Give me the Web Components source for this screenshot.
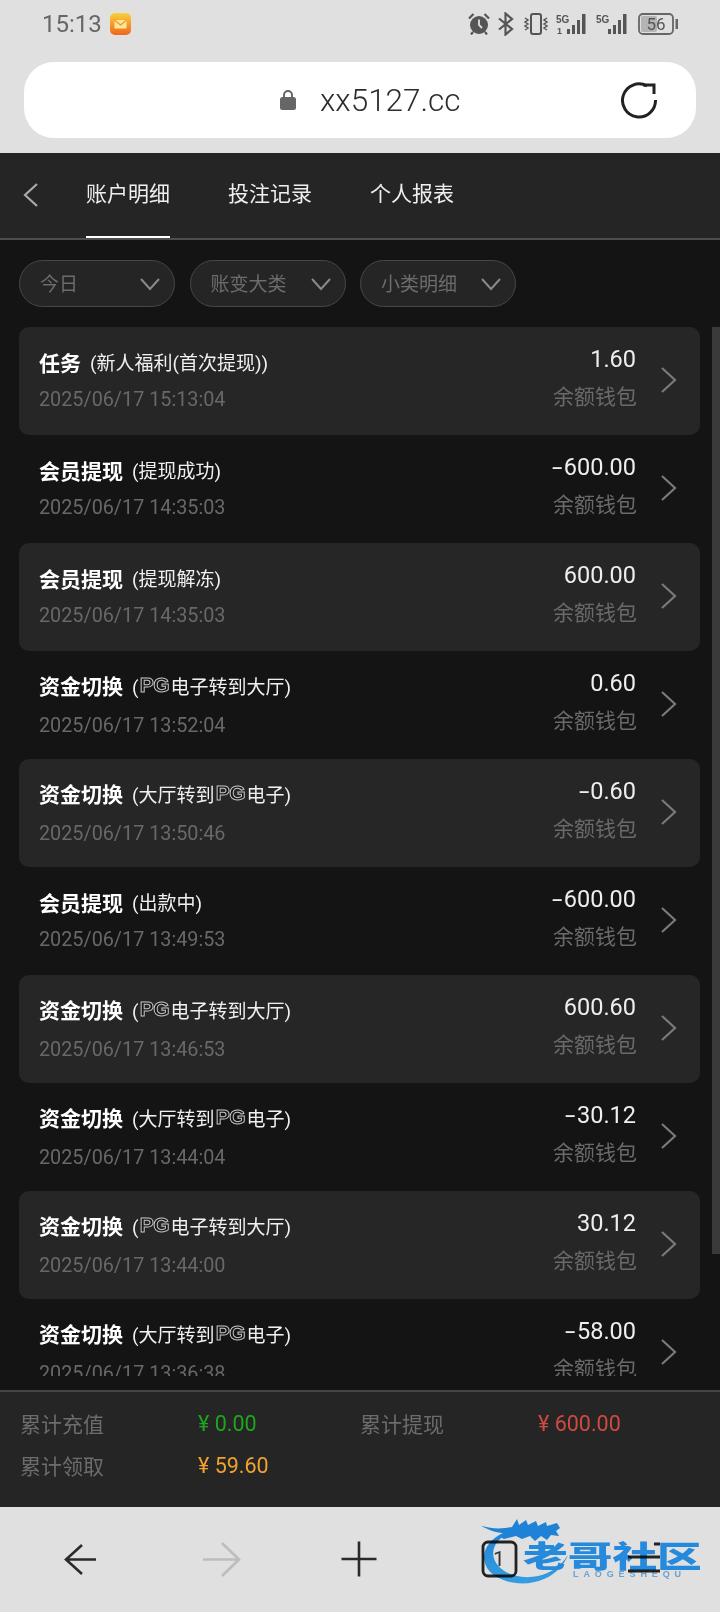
<!DOCTYPE html>
<html lang="zh-CN">
<head>
<meta charset="utf-8">
<title>账户明细</title>
<style>
    html, body { margin: 0; padding: 0; }
    body {
        width: 720px;
        height: 1612px;
        overflow: hidden;
        background: #141414;
        font-family: Roboto, "Noto Sans CJK SC", sans-serif;
    }
    #page { display: flex; flex-direction: column; width: 720px; height: 1612px; position: relative; }
</style>
</head>
<body>
<div id="page">
    <status-bar></status-bar>
    <url-bar address="xx5127.cc"></url-bar>
    <account-tabs></account-tabs>
    <filter-bar></filter-bar>
    <ledger-list>
        <ledger-row card title="任务" date="2025/06/17 15:13:04" amount="1.60">(新人福利(首次提现))</ledger-row>
        <ledger-row title="会员提现" date="2025/06/17 14:35:03" amount="-600.00">(提现成功)</ledger-row>
        <ledger-row card title="会员提现" date="2025/06/17 14:35:03" amount="600.00">(提现解冻)</ledger-row>
        <ledger-row title="资金切换" date="2025/06/17 13:52:04" amount="0.60">(<pg-logo></pg-logo>电子转到大厅)</ledger-row>
        <ledger-row card title="资金切换" date="2025/06/17 13:50:46" amount="-0.60">(大厅转到<pg-logo></pg-logo>电子)</ledger-row>
        <ledger-row title="会员提现" date="2025/06/17 13:49:53" amount="-600.00">(出款中)</ledger-row>
        <ledger-row card title="资金切换" date="2025/06/17 13:46:53" amount="600.60">(<pg-logo></pg-logo>电子转到大厅)</ledger-row>
        <ledger-row title="资金切换" date="2025/06/17 13:44:04" amount="-30.12">(大厅转到<pg-logo></pg-logo>电子)</ledger-row>
        <ledger-row card title="资金切换" date="2025/06/17 13:44:00" amount="30.12">(<pg-logo></pg-logo>电子转到大厅)</ledger-row>
        <ledger-row title="资金切换" date="2025/06/17 13:36:38" amount="-58.00">(大厅转到<pg-logo></pg-logo>电子)</ledger-row>
    </ledger-list>
    <summary-bar></summary-bar>
    <browser-nav></browser-nav>
    <site-watermark></site-watermark>
</div>
<script>
const FONT = `Roboto, "Noto Sans CJK SC", sans-serif`;

class StatusBar extends HTMLElement {
    constructor() {
        super();
        this.attachShadow({ mode: 'open' });
    }
    connectedCallback() {
        this.shadowRoot.innerHTML = `
            <style>
                :host {
                    display: flex;
                    align-items: center;
                    justify-content: space-between;
                    height: 48px;
                    padding: 0 41px 0 42px;
                    background: #e0e0e0;
                    color: #666;
                    font-family: ${FONT};
                }
                .left { display: flex; align-items: center; gap: 8px; font-size: 24px; }
                .right { display: flex; align-items: center; }
                svg { display: block; }
                text { font-family: "Liberation Sans", sans-serif; font-weight: 700; fill: #555; }
            </style>
            <div class="left">
                <span>15:13</span>
                <svg width="21" height="22" viewBox="0 0 21 22">
                    <defs><linearGradient id="m" x1="0" y1="0" x2="0" y2="1"><stop offset="0" stop-color="#f7d23a"/><stop offset="1" stop-color="#f0651c"/></linearGradient></defs>
                    <rect width="21" height="22" rx="5" fill="url(#m)"/>
                    <path d="M4.500 7h12v8.500h-12z" fill="#fbe89a"/>
                    <path d="M4.500 7l6 5 6-5" fill="none" stroke="#f49a2a" stroke-width="1.400"/>
                </svg>
            </div>
            <div class="right">
                <svg width="22" height="22" viewBox="0 0 22 22" style="margin-right:7px">
                    <circle cx="11" cy="12" r="9" fill="#555"/>
                    <path d="M11 6.500V12l3 3" fill="none" stroke="#e0e0e0" stroke-width="1.800"/>
                    <path d="M1 5.500L5.500 1M21 5.500L16.500 1M5 19l-2 2.500M17 19l2 2.500" stroke="#555" stroke-width="2.200" fill="none"/>
                </svg>
                <svg width="18" height="24" viewBox="0 0 18 24" style="margin-right:7px">
                    <path d="M2 6.500L15 17l-6.500 5.500V1.500L15 7 2 17.500" fill="none" stroke="#555" stroke-width="2.200"/>
                </svg>
                <svg width="28" height="22" viewBox="0 0 28 22" style="margin-right:6px">
                    <rect x="9" y="1" width="10" height="20" rx="2" fill="none" stroke="#555" stroke-width="2"/>
                    <path d="M3 5l3 2-3 2 3 2-3 2 3 2-3 2M25 5l-3 2 3 2-3 2 3 2-3 2 3 2" fill="none" stroke="#555" stroke-width="1.500"/>
                </svg>
                <svg width="35" height="22" viewBox="0 0 35 22" style="margin-right:5px">
                    <text x="0" y="10" font-size="10">5G</text>
                    <text x="1" y="21" font-size="9">1</text>
                    <path d="M11 16h3v5h-3zM16 12h3v9h-3zM21 7h3v14h-3zM26 1h3.500v20H26z" fill="#555"/>
                </svg>
                <svg width="35" height="22" viewBox="0 0 35 22" style="margin-right:7px">
                    <text x="0" y="10" font-size="10">5G</text>
                    <path d="M12 16h3v5h-3zM17 12h3v9h-3zM22 7h3v14h-3zM27 1h3.500v20H27z" fill="#555"/>
                </svg>
                <svg width="41" height="22" viewBox="0 0 41 22">
                    <rect x="1" y="1" width="34" height="20" rx="4" fill="none" stroke="#666" stroke-width="1.800"/>
                    <rect x="3" y="3" width="16" height="16" rx="2" fill="#b4b4b4"/>
                    <rect x="37.500" y="6" width="2.500" height="10" fill="#666"/>
                    <text x="18" y="17" font-size="17" text-anchor="middle" style="font-family:Roboto;font-weight:400;fill:#555">56</text>
                </svg>
            </div>
        `;
    }
}

class UrlBar extends HTMLElement {
    constructor() {
        super();
        this.attachShadow({ mode: 'open' });
    }
    connectedCallback() {
        this.shadowRoot.innerHTML = `
            <style>
                :host {
                    display: block;
                    padding: 14px 24px 15px;
                    background: #e0e0e0;
                    font-family: ${FONT};
                }
                .pill {
                    display: flex;
                    align-items: center;
                    height: 76px;
                    background: #fff;
                    border-radius: 30px;
                    padding: 0 38px 0 256px;
                }
                .lock { margin-right: 24px; display: block; }
                .addr { font-size: 31.500px; font-weight: 300; color: #2c2c2c; flex: 1; }
            </style>
            <div class="pill">
                <svg class="lock" width="16" height="20" viewBox="0 0 16 20">
                    <path d="M4 8V5a4 4 0 0 1 8 0v3" fill="none" stroke="#666" stroke-width="2"/>
                    <rect y="7" width="16" height="13" rx="2.500" fill="#666"/>
                </svg>
                <span class="addr">${this.getAttribute('address')}</span>
                <svg width="38" height="38" viewBox="0 0 38 38">
                    <path d="M27 5A16.500 16.500 0 1 0 35.500 19" fill="none" stroke="#222" stroke-width="3"/>
                    <path d="M23 4h11v9" fill="none" stroke="#222" stroke-width="3"/>
                </svg>
            </div>
        `;
    }
}

class AccountTabs extends HTMLElement {
    constructor() {
        super();
        this.attachShadow({ mode: 'open' });
    }
    connectedCallback() {
        this.shadowRoot.innerHTML = `
            <style>
                :host {
                    display: flex;
                    height: 85px;
                    background: #252525;
                    border-bottom: 2px solid #4d4d4d;
                    color: #eee;
                    font-family: ${FONT};
                    font-size: 21px;
                }
                .back { width: 86px; display: flex; align-items: center; padding-left: 22px; box-sizing: border-box; margin-bottom: 2px; }
                .tab { display: flex; align-items: center; padding-bottom: 5px; box-sizing: border-box; margin-right: 58px; border-bottom: 2px solid transparent; height: 85px; }
                .tab.on { border-bottom-color: #fff; }
            </style>
            <div class="back">
                <svg width="18" height="26" viewBox="0 0 18 26"><path d="M15 2L3 13l12 11" fill="none" stroke="#aaa" stroke-width="2.200"/></svg>
            </div>
            <div class="tab on">账户明细</div>
            <div class="tab">投注记录</div>
            <div class="tab">个人报表</div>
        `;
    }
}

class FilterBar extends HTMLElement {
    constructor() {
        super();
        this.attachShadow({ mode: 'open' });
    }
    connectedCallback() {
        const pill = (label) => `
            <div class="pill">
                <span>${label}</span>
                <svg width="22" height="14" viewBox="0 0 22 14"><path d="M2 2l9 10 9-10" fill="none" stroke="#8a8a8a" stroke-width="2"/></svg>
            </div>`;
        this.shadowRoot.innerHTML = `
            <style>
                :host {
                    display: flex;
                    gap: 14.500px;
                    padding: 20px 0 20px 19px;
                    font-family: ${FONT};
                }
                .pill {
                    box-sizing: border-box;
                    width: 156px;
                    height: 47px;
                    border: 1.500px solid #474747;
                    border-radius: 24px;
                    background: #252525;
                    color: #6c6c6c;
                    font-size: 19px;
                    display: flex;
                    align-items: center;
                    justify-content: space-between;
                    padding: 0 13px 0 20px;
                }
                .pill span { margin-bottom: 3px; }
            </style>
            ${pill('今日')}${pill('账变大类')}${pill('小类明细')}
        `;
    }
}

class PgLogo extends HTMLElement {
    constructor() {
        super();
        this.attachShadow({ mode: 'open' });
    }
    connectedCallback() {
        this.shadowRoot.innerHTML = `
            <style>
                :host {
                    display: inline-block;
                    width: 32px;
                    height: 29px;
                    line-height: 29px;
                    vertical-align: -6px;
                    text-align: center;
                    overflow: hidden;
                }
                span {
                    font: 700 21px "Liberation Sans", sans-serif;
                    letter-spacing: -.5px;
                    color: #141414;
                    -webkit-text-stroke: 1px #c4c4c4;
                }
            </style>
            <span>PG</span>
        `;
    }
}

class LedgerList extends HTMLElement {
    constructor() {
        super();
        this.attachShadow({ mode: 'open' });
    }
    connectedCallback() {
        this.shadowRoot.innerHTML = `
            <style>
                :host {
                    display: block;
                    position: relative;
                    flex: 1;
                    min-height: 0;
                    margin-bottom: 14px;
                    overflow: hidden;
                    padding: 0 20px 0 19px;
                    background: #141414;
                }
                .thumb {
                    position: absolute;
                    top: 0;
                    right: 0;
                    width: 8px;
                    height: 927px;
                    background: #3a3a3a;
                }
            </style>
            <slot></slot>
            <div class="thumb"></div>
        `;
    }
}

class LedgerRow extends HTMLElement {
    constructor() {
        super();
        this.attachShadow({ mode: 'open' });
    }
    connectedCallback() {
        // rows with the PG logo have a taller first line
        if (this.querySelector('pg-logo')) this.setAttribute('pg', '');
        const amount = this.getAttribute('amount');
        const shown = amount.startsWith('-')
            ? `<span class="sign">-</span>${amount.slice(1)}`
            : amount;
        this.shadowRoot.innerHTML = `
            <style>
                :host {
                    display: grid;
                    grid-template-columns: 1fr auto 63px;
                    box-sizing: border-box;
                    height: 108px;
                    padding-left: 20px;
                    border-radius: 10px;
                    font-family: ${FONT};
                }
                :host([card]) { background: #262626; }
                .main { padding-top: 24px; }
                :host([pg]) .main { padding-top: 22px; }
                .head { display: flex; align-items: center; min-height: 26px; color: #f0f0f0; }
                .title { font-size: 21px; font-weight: 700; line-height: 26px; color: #fff; margin-right: 9px; }
                .sub { font-size: 19px; line-height: 26px; }
                :host([pg]) .sub { margin-top: -2px; }
                .date { margin-top: 10px; font-size: 19.800px; line-height: 26px; color: #686868; white-space: nowrap; }
                :host([pg]) .date { margin-top: 12px; }
                .side { padding-top: 18px; text-align: right; }
                .amount { font-size: 23.500px; line-height: 28px; color: #eee; margin-right: 1px; }
                .sign { display: inline-block; transform: scaleX(1.6); margin: 0 3px 0 2px; }
                .wallet { margin-top: 10px; font-size: 21px; line-height: 28px; color: #6a6a6a; }
                .more { display: flex; align-items: center; justify-content: flex-end; padding: 0 22px 2px 0; }
            </style>
            <div class="main">
                <div class="head">
                    <span class="title">${this.getAttribute('title')}</span>
                    <span class="sub"><slot></slot></span>
                </div>
                <div class="date">${this.getAttribute('date')}</div>
            </div>
            <div class="side">
                <div class="amount">${shown}</div>
                <div class="wallet">余额钱包</div>
            </div>
            <div class="more">
                <svg width="18" height="28" viewBox="0 0 18 28"><path d="M2 2l13 12L2 26" fill="none" stroke="#7a7a7a" stroke-width="2.200"/></svg>
            </div>
        `;
    }
}

class SummaryBar extends HTMLElement {
    constructor() {
        super();
        this.attachShadow({ mode: 'open' });
    }
    connectedCallback() {
        this.shadowRoot.innerHTML = `
            <style>
                :host {
                    display: grid;
                    grid-template-columns: 178px 162px 178px 1fr;
                    grid-auto-rows: 42px;
                    align-items: center;
                    box-sizing: border-box;
                    height: 117px;
                    padding: 10px 0 0 20px;
                    background: #252525;
                    border-top: 2px solid #444;
                    font-family: ${FONT};
                    font-size: 21px;
                    color: #6c6c6c;
                }
                .v { font-size: 21.500px; }
                .green { color: #1ea51e; }
                .red { color: #cf4a40; }
                .orange { color: #efa22f; }
            </style>
            <span>累计充值</span><span class="v green">¥ 0.00</span>
            <span>累计提现</span><span class="v red">¥ 600.00</span>
            <span>累计领取</span><span class="v orange">¥ 59.60</span>
        `;
    }
}

class BrowserNav extends HTMLElement {
    constructor() {
        super();
        this.attachShadow({ mode: 'open' });
    }
    connectedCallback() {
        this.shadowRoot.innerHTML = `
            <style>
                :host {
                    display: grid;
                    grid-template-columns: 140px 140px 136px 146px 142px;
                    justify-items: center;
                    align-content: start;
                    box-sizing: border-box;
                    height: 105px;
                    padding: 32px 0 0 11px;
                    background: #e0e0e0;
                    font-family: ${FONT};
                }
                svg { display: block; }
                .num { font-size: 21px; fill: #333; }
            </style>
            <svg width="40" height="40" viewBox="0 0 40 40"><path d="M21 6L5 20.500 21 35M5 20.500h30" fill="none" stroke="#2a2a2a" stroke-width="2.600"/></svg>
            <svg width="40" height="40" viewBox="0 0 40 40"><path d="M21 4l17 16.500L21 37M2 20.500h36" fill="none" stroke="#bdbdbd" stroke-width="2.600"/></svg>
            <svg width="40" height="40" viewBox="0 0 40 40"><path d="M20 2.500v35M2.500 20h35" fill="none" stroke="#2a2a2a" stroke-width="2.600"/></svg>
            <svg width="40" height="40" viewBox="0 0 40 40"><rect x="3" y="3" width="33" height="34" rx="5" fill="none" stroke="#222" stroke-width="2.800"/><text class="num" x="19" y="27" text-anchor="middle">1</text></svg>
            <svg width="40" height="40" viewBox="0 0 40 40"><path d="M30 5h6M4 18h32M4 32h32" fill="none" stroke="#222" stroke-width="2.800"/></svg>
        `;
    }
}

class SiteWatermark extends HTMLElement {
    constructor() {
        super();
        this.attachShadow({ mode: 'open' });
    }
    connectedCallback() {
        this.shadowRoot.innerHTML = `
            <style>
                :host {
                    position: absolute;
                    left: 482px;
                    top: 1516px;
                    width: 226px;
                    height: 72px;
                    mix-blend-mode: multiply;
                    font-family: "Noto Sans CJK SC", sans-serif;
                }
                svg { position: absolute; left: 0; top: 0; filter: blur(.6px); }
                .name {
                    position: absolute;
                    left: 41px;
                    top: 23px;
                    font-size: 30px;
                    line-height: 30px;
                    font-weight: 900;
                    color: #2a9dfb;
                    transform: scaleX(1.49);
                    transform-origin: left top;
                    white-space: nowrap;
                    filter: blur(.5px);
                }
                .en {
                    position: absolute;
                    left: 91px;
                    top: 54px;
                    font: 700 9px/9px "Liberation Sans", sans-serif;
                    letter-spacing: 4.900px;
                    color: #7db7ea;
                    white-space: nowrap;
                }
            </style>
            <svg width="226" height="72" viewBox="0 0 226 72">
                <defs><linearGradient id="a" x1="0" y1="0" x2="0" y2="1"><stop offset="0" stop-color="#2295f5"/><stop offset="1" stop-color="#3db4ff"/></linearGradient></defs>
                <path d="M28 14C6 22-2 36 4 50c7 15 36 23 58 13 12-5 20-14 24-24-7 11-17 18-30 21-19 4-37-3-43-15-5-11 0-22 18-30z" fill="url(#a)"/>
                <path d="M0 10c10 3 20 3 30 1l5-8 2 6 7-5 2 5 8-4 2 5 8-4 1 4 10-3 3 5-4 3 3 5-8-1-4 5-6-4-6 5-5-5-8 3-6-3-12 3c-4-1-3-4 1-6-9 0-16-3-24-7z" fill="#2295f5"/>
            </svg>
            <div class="name">老哥社区</div>
            <div class="en">LAOGESHEQU</div>
        `;
    }
}

customElements.define('status-bar', StatusBar);
customElements.define('url-bar', UrlBar);
customElements.define('account-tabs', AccountTabs);
customElements.define('filter-bar', FilterBar);
customElements.define('pg-logo', PgLogo);
customElements.define('ledger-list', LedgerList);
customElements.define('ledger-row', LedgerRow);
customElements.define('summary-bar', SummaryBar);
customElements.define('browser-nav', BrowserNav);
customElements.define('site-watermark', SiteWatermark);
</script>
</body>
</html>
